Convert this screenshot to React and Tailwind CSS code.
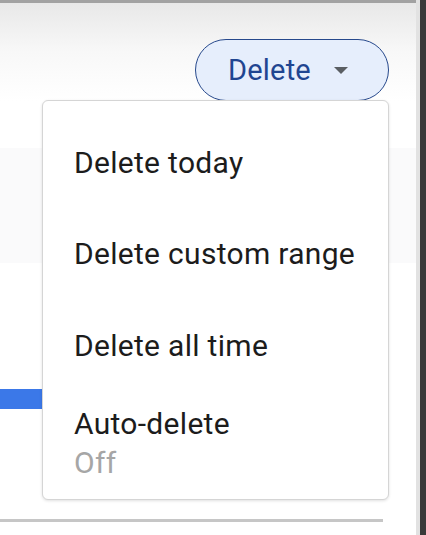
import React from 'react';

// History "Delete" dropdown, opened
const menuItems = [
  { label: 'Delete today', mt: 'mt-0' },
  { label: 'Delete custom range', mt: 'mt-[55px]' },
  { label: 'Delete all time', mt: 'mt-[56px]' },
];

export default function App() {
  return (
    <div className="relative flex h-[535px] w-[426px] overflow-hidden bg-white font-['Roboto',_'Liberation_Sans',_sans-serif]">
      <div className="flex flex-1 flex-col border-t-[3px] border-[#a2a2a2]">
        <div className="flex justify-end bg-linear-to-b from-[#e8e8e8] via-[#f8f8f8] to-white pr-[27px] pt-[36px]">
          <button
            type="button"
            className="flex h-[62px] w-[194px] items-center rounded-full border-[1.5px] border-[#27498c] bg-[#e6eefc] pl-[32px] text-[29px] leading-none tracking-[0.2px] text-[#1f4591]"
          >
            <span>Delete</span>
            <svg className="ml-auto mr-[40px]" width="14" height="7" viewBox="0 0 14 7">
              <path d="M0 0 L14 0 L7 7 Z" fill="#5a5e63" />
            </svg>
          </button>
        </div>
        <div className="mt-[47px] h-[115px] bg-[#fafafb]" />
        <div className="mt-[126px] h-[20px] w-[120px] bg-[#3b78e8]" />
        <div className="mt-[110px] h-[3px] w-[383px] bg-[#c6c6c6]" />
      </div>
      <div className="w-[4px] bg-[#e2e2e2]" />
      <div className="w-[6px] bg-[#3a3a3a]" />

      <div className="absolute left-[42px] top-[100px] flex h-[400px] w-[347px] flex-col rounded-[6px] border border-[#d5d5d5] bg-white pl-[31px] pt-[44px] text-[30px] leading-[36px] tracking-[0.3px] text-[#1c1c1c] shadow-[0_1px_3px_rgba(0,0,0,0.12)]">
        {menuItems.map((item) => (
          <div key={item.label} className={item.mt}>
            {item.label}
          </div>
        ))}
        <div className="mt-[42px]">Auto-delete</div>
        <div className="mt-[3px] text-[#a6a6a6]">Off</div>
      </div>
    </div>
  );
}
